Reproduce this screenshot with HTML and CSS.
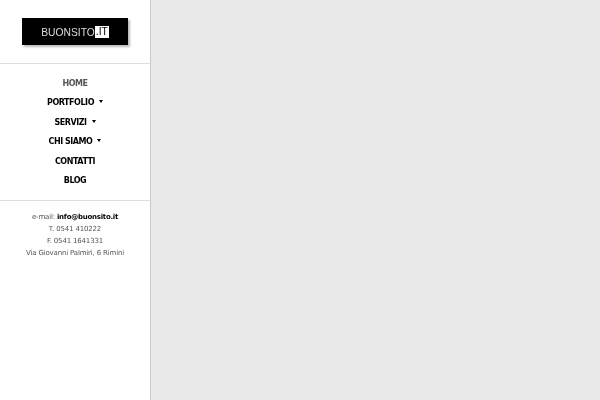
FILE: index.html
```html
<!DOCTYPE html>
<html lang="it">
<head>
  <meta charset="UTF-8" />
  <title>Buonsito.it</title>
  <link rel="stylesheet" href="styles.css">
</head>
<body>
  <aside class="sidebar">
    <div class="logo-wrap">
      <a class="logo" href="#">BUONSITO<span class="logo-it">.IT</span></a>
    </div>

    <nav class="menu">
      <a class="menu-item active" href="#">HOME</a>
      <a class="menu-item has-sub" href="#">PORTFOLIO</a>
      <a class="menu-item has-sub" href="#">SERVIZI</a>
      <a class="menu-item has-sub" href="#">CHI SIAMO</a>
      <a class="menu-item" href="#">CONTATTI</a>
      <a class="menu-item" href="#">BLOG</a>
    </nav>

    <div class="contacts">
      <p>e-mail: <a href="#">info@buonsito.it</a></p>
      <p>T. 0541 410222</p>
      <p>F. 0541 1641331</p>
      <p>Via Giovanni Palmiri, 6 Rimini</p>
    </div>
  </aside>
  <main class="content"></main>
</body>
</html>
```

FILE: styles.css
```css
* {
  margin: 0;
  padding: 0;
  box-sizing: border-box;
}

html,
body {
  height: 100%;
  overflow: hidden;
}

body {
  display: flex;
  font-family: "DejaVu Sans", Verdana, sans-serif;
  background-color: #e8e8e8;
  color: #555;
}

a {
  text-decoration: none;
}

.sidebar {
  width: 151px;
  flex: none;
  background-color: #fff;
  border-right: 1px solid #ccc;
}

.content {
  flex: 1;
}

.logo-wrap {
  height: 64px;
  padding-top: 18px;
  border-bottom: 1px solid #ddd;
}

/* the reference text is soft, a small blur also drops the colour fringes */
.logo {
  display: flex;
  align-items: center;
  justify-content: center;
  width: 106px;
  height: 27px;
  margin-left: 22px;
  padding-top: 1px;
  background-color: #000;
  box-shadow: 2px 2px 2px #bbb;
  font-family: "Liberation Sans", Arial, sans-serif;
  font-size: 10.3px;
  color: #ddd;
  filter: blur(0.25px);
}

.logo-it {
  padding: 0 1px;
  background-color: #fff;
  color: #000;
  line-height: 12px;
}

.menu {
  height: 137px;
  padding-top: 9.5px;
  border-bottom: 1px solid #ddd;
}

.menu-item {
  display: block;
  height: 19.5px;
  line-height: 19.5px;
  text-align: center;
  font-size: 8px;
  font-weight: bold;
  letter-spacing: -0.45px;
  color: #000;
  filter: blur(0.25px);
}

.menu-item.active {
  color: #555;
}

.has-sub::after {
  content: "";
  display: inline-block;
  margin-left: 5px;
  vertical-align: 2px;
  border-top: 3px solid #000;
  border-left: 2.5px solid transparent;
  border-right: 2.5px solid transparent;
}

.contacts {
  padding-top: 10px;
  text-align: center;
  font-size: 7px;
  letter-spacing: -0.17px;
  line-height: 12px;
  filter: blur(0.25px);
}

.contacts a {
  font-weight: bold;
  letter-spacing: -0.25px;
  color: #000;
}
```
